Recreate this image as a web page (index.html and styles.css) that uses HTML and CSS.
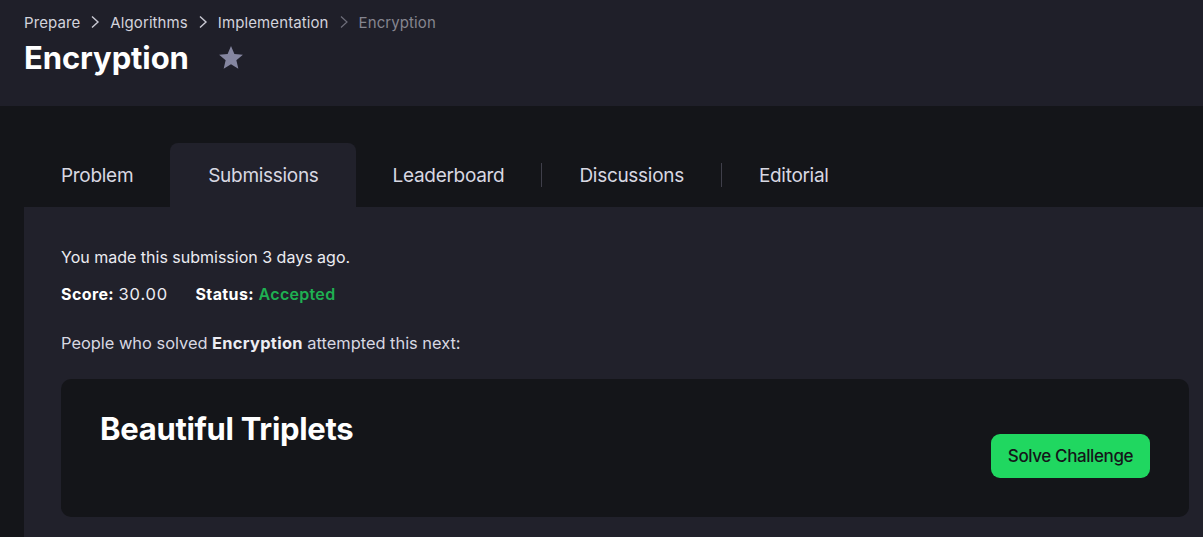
FILE: index.html
```html
<!DOCTYPE html>
<html>
<head>
<meta charset="utf-8">
<link rel="stylesheet" href="styles.css">
</head>
<body>
<header class="header">
  <nav class="crumbs">
    <span class="crumb">Prepare</span>
    <svg class="chev" viewBox="0 0 10 14" width="10" height="14"><path d="M2 1.5 L8 7 L2 12.5" fill="none" stroke="#c9c9d3" stroke-width="1.4"/></svg>
    <span class="crumb">Algorithms</span>
    <svg class="chev" viewBox="0 0 10 14" width="10" height="14"><path d="M2 1.5 L8 7 L2 12.5" fill="none" stroke="#c9c9d3" stroke-width="1.4"/></svg>
    <span class="crumb">Implementation</span>
    <svg class="chev" viewBox="0 0 10 14" width="10" height="14"><path d="M2 1.5 L8 7 L2 12.5" fill="none" stroke="#6e6e7a" stroke-width="1.2"/></svg>
    <span class="crumb current">Encryption</span>
  </nav>
  <div class="title-row">
    <h1 class="title">Encryption</h1>
    <svg class="star" viewBox="0 0 24 24" width="28" height="28"><path d="M12 1.8 L14.9 8.6 L22.2 9.2 L16.6 14 L18.3 21.2 L12 17.4 L5.7 21.2 L7.4 14 L1.8 9.2 L9.1 8.6 Z" fill="#8586a0"/></svg>
  </div>
</header>
<main class="main">
  <div class="tabs">
    <div class="tab">Problem</div>
    <div class="tab active">Submissions</div>
    <div class="tab">Leaderboard</div>
    <div class="sep"></div>
    <div class="tab">Discussions</div>
    <div class="sep"></div>
    <div class="tab">Editorial</div>
  </div>
  <section class="panel">
    <p class="made">You made this submission 3 days ago.</p>
    <p class="score"><b>Score:</b> <span class="val">30.00</span> <b class="status-label">Status:</b> <span class="accepted">Accepted</span></p>
    <p class="people">People who solved <b>Encryption</b> attempted this next:</p>
    <div class="card">
      <h2 class="card-title">Beautiful Triplets</h2>
      <button class="solve">Solve Challenge</button>
    </div>
  </section>
</main>
</body>
</html>
```
FILE: styles.css
```css
html, body {
  margin: 0;
  padding: 0;
  background: #141519;
  overflow: hidden;
  width: 1203px;
  height: 537px;
}
body {
  font-family: Inter, "Noto Sans", sans-serif;
  color: #e6e6ee;
}
.header {
  background: #1f1f29;
  height: 106px;
  padding: 12px 0 0 24px;
  box-sizing: border-box;
}
.crumbs {
  display: flex;
  align-items: center;
  gap: 10px;
  font-size: 15px;
  color: #d3d3dc;
  height: 20px;
  letter-spacing: 0.1px;
}
.crumb.current { color: #85858f; }
.chev { display: block; }
.title-row {
  display: flex;
  align-items: center;
  margin-top: 6px;
  gap: 28px;
}
.title {
  margin: 0;
  font-size: 31px;
  font-weight: 700;
  color: #ffffff;
  letter-spacing: -0.1px;
  line-height: 40px;
}
.star { display: block; margin-top: 0; }
.main {
  padding: 37px 0 0 24px;
}
.tabs {
  display: flex;
  align-items: center;
  height: 64px;
}
.tab {
  height: 64px;
  display: flex;
  align-items: center;
  padding: 0 37px;
  font-size: 19px;
  color: #d8d8e2;
  letter-spacing: -0.3px;
  border-radius: 8px 8px 0 0;
}
.tab.active {
  background: #21212b;
  padding: 0 37px 0 38px;
}
.sep {
  width: 1px;
  height: 24px;
  background: #3f3f4a;
}
.panel {
  background: #21212b;
  width: 1202px;
  box-sizing: border-box;
  padding: 38px 37px 20px 37px;
  height: 330px;
}
.panel p {
  margin: 0;
  font-size: 16px;
  letter-spacing: 0;
  color: #ececf2;
}
.made { line-height: 24px; }
.score { margin-top: 13px !important; line-height: 24px; }
.score b { font-weight: 700; color: #ffffff; letter-spacing: 0.4px; }
.score .val { letter-spacing: 0.8px; font-size: 16.5px; }
.status-label { margin-left: 23px; }
.accepted { color: #1fb052; font-weight: 600; letter-spacing: 0.3px; }
.people { margin-top: 25px !important; line-height: 24px; color: #d8d8e2 !important; font-size: 16.4px !important; }
.people b { color: #ececf2; letter-spacing: 0.3px; }
.card {
  margin-top: 24px;
  background: #141519;
  border-radius: 10px;
  height: 138px;
  box-sizing: border-box;
  padding: 30px 39px 0 39px;
  display: flex;
  justify-content: space-between;
  align-items: flex-start;
}
.card-title {
  margin: 0;
  font-size: 31px;
  font-weight: 700;
  color: #ffffff;
  letter-spacing: -0.3px;
  line-height: 40px;
}
.solve {
  margin-top: 25px;
  background: #20d760;
  border: none;
  border-radius: 9px;
  width: 159px;
  height: 44px;
  font-family: Inter, "Noto Sans", sans-serif;
  font-size: 17px;
  font-weight: 500;
  color: #141519;
  letter-spacing: -0.4px;
  padding: 0;
}
```
